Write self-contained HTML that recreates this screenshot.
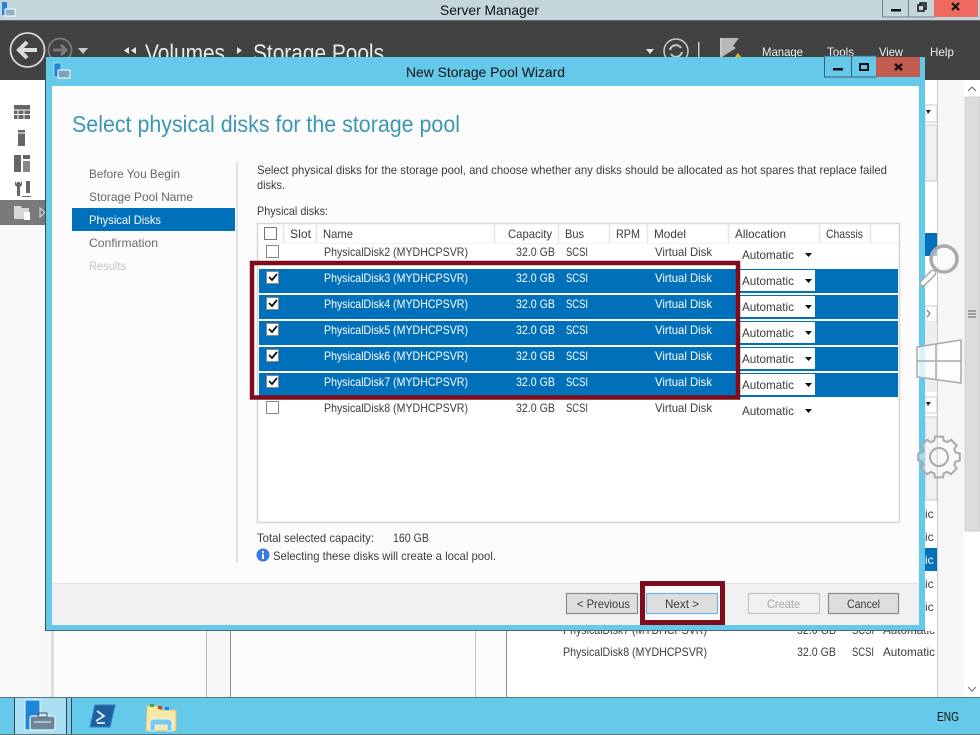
<!DOCTYPE html>
<html><head><meta charset="utf-8"><title>Server Manager</title>
<style>
html,body{margin:0;padding:0;width:980px;height:735px;overflow:hidden;background:#fff}
svg{display:block;filter:blur(.3px)}
text{font-family:"Liberation Sans",sans-serif;font-size:12px;fill:#3c3c3c}
.w{fill:#fff}.d{fill:#111}.n{fill:#666}.s{font-size:11.500px}
</style></head><body>
<svg xmlns="http://www.w3.org/2000/svg" width="980" height="735" viewBox="0 0 980 735">
<rect width="980" height="735" fill="#fff"/>
<!-- main title bar -->
<rect width="980" height="21" fill="#c3d6dc"/>
<rect y="20" width="980" height="1" fill="#5d676b"/>
<rect x="2" y="2" width="5" height="13" fill="#1e86d8"/><rect x="5" y="9" width="10" height="7" fill="#8fb4c8" stroke="#fff"/>
<text x="440" y="15" textLength="99" lengthAdjust="spacingAndGlyphs" class="d" style="font-size:14px">Server Manager</text>
<g stroke="#75868c" fill="#c3d6dc"><rect x="882.500" y="-1" width="26" height="18"/><rect x="908.500" y="-1" width="26" height="18"/></g>
<rect x="934" y="0" width="44" height="17" fill="#ee6a5e"/>
<rect x="891" y="9" width="10" height="2.500" fill="#111"/>
<path d="M918 5h6v6h-6zM920 5V3h6v6h-2" fill="none" stroke="#111" stroke-width="1.500"/>
<path d="M952 3l7 7M959 3l-7 7" stroke="#111" stroke-width="2.200"/>
<!-- dark command bar -->
<rect y="21" width="980" height="59" fill="#424242"/>
<circle cx="27.500" cy="50" r="17" fill="none" stroke="#d8d8d8" stroke-width="1.800"/>
<path d="M37 50H19M27 42l-8 8 8 8" fill="none" stroke="#dcdcdc" stroke-width="4"/>
<circle cx="60" cy="50" r="11.500" fill="none" stroke="#7a7a7a" stroke-width="1.800"/>
<path d="M53 50h13M61 45l5 5-5 5" fill="none" stroke="#7a7a7a" stroke-width="3"/>
<path d="M78 48h10l-5 6z" fill="#c8c8c8"/>
<path d="M129 47v7l-5-3.500zM136 47v7l-5-3.500zM237 47v7l5-3.500z" fill="#e4e4e4"/>
<text x="145" y="61" textLength="80" lengthAdjust="spacingAndGlyphs" style="font-size:24px;fill:#e8e8e8">Volumes</text>
<text x="253" y="61" textLength="131" lengthAdjust="spacingAndGlyphs" style="font-size:24px;fill:#e8e8e8">Storage Pools</text>
<path d="M646 49h8l-4 5z" fill="#e4e4e4"/>
<circle cx="676" cy="51" r="12" fill="none" stroke="#c8c8c8" stroke-width="1.500"/>
<path d="M670 50a6 6 0 0 1 11-2M682 52a6 6 0 0 1-11 2" fill="none" stroke="#c8c8c8" stroke-width="2"/>
<rect x="698" y="42" width="1.500" height="15" fill="#c8c8c8"/>
<path d="M721 38h18l-6 8 3 2-14 9z" fill="#b8b8b8"/><rect x="720" y="38" width="2" height="20" fill="#c8c8c8"/>
<path d="M738 53l3 4h-6z" fill="#f5b400"/>
<text x="762" y="56" textLength="41" lengthAdjust="spacingAndGlyphs" style="fill:#eee">Manage</text>
<text x="827" y="56" textLength="27" lengthAdjust="spacingAndGlyphs" style="fill:#eee">Tools</text>
<text x="879" y="56" textLength="24" lengthAdjust="spacingAndGlyphs" style="fill:#eee">View</text>
<text x="930" y="56" textLength="24" lengthAdjust="spacingAndGlyphs" style="fill:#eee">Help</text>
<!-- main body -->
<rect y="80" width="964" height="617" fill="#f7f7f7"/>
<rect x="0" y="80" width="45" height="120" fill="#fff"/>
<rect x="0" y="225" width="45" height="472" fill="#f8f8f8"/>
<rect y="200" width="45" height="25" fill="#7a7a7a"/>
<!-- nav icons -->
<g fill="#666">
<path d="M14 105h16v14H14z"/><rect x="18" y="130" width="7" height="16"/>
<path d="M14 155h7v17h-7zM23 155h7v4h-7z"/><rect x="23" y="161" width="7" height="11" fill="#888"/>
<path d="M26 181h4v12h-4zM17 182h3v14h-3zM15 181l2 3h3l2-3v4l-2 2h-3l-2-2zM22 196h9v1h-9z"/>
</g>
<path d="M18 110v9M24 110v9M14 110h16M14 114.500h16" stroke="#fff" stroke-width="1"/>
<path d="M18 133h7" stroke="#fff"/>
<path d="M14 206h7l1 2h7v11H14z" fill="#d8d8d8"/><rect x="24" y="212" width="6" height="8" fill="#fff"/>
<path d="M40 208l5 4.500-5 4.500z" fill="none" stroke="#ddd"/>
<!-- panels below wizard -->
<rect x="51" y="631" width="3" height="66" fill="#dcdcdc"/>
<rect x="54" y="631" width="152" height="66" fill="#fbfbfb"/>
<rect x="206" y="631" width="1" height="66" fill="#bcbcbc"/>
<rect x="230" y="631" width="1" height="66" fill="#8c8c8c"/>
<rect x="231" y="631" width="244" height="66" fill="#fbfbfb"/>
<rect x="475" y="631" width="1" height="66" fill="#c4c4c4"/>
<rect x="476" y="631" width="30" height="66" fill="#fbfbfb"/>
<rect x="506" y="631" width="431" height="66" fill="#fff"/>
<rect x="506" y="631" width="1" height="66" fill="#8c8c8c"/>
<text x="563" y="634" textLength="144" lengthAdjust="spacingAndGlyphs">PhysicalDisk7 (MYDHCPSVR)</text>
<text x="797" y="634" textLength="39" lengthAdjust="spacingAndGlyphs">32.0 GB</text>
<text x="852" y="634" textLength="22" lengthAdjust="spacingAndGlyphs" class="s">SCSI</text>
<text x="883" y="634" textLength="52" lengthAdjust="spacingAndGlyphs">Automatic</text>
<text x="563" y="656" textLength="144" lengthAdjust="spacingAndGlyphs">PhysicalDisk8 (MYDHCPSVR)</text>
<text x="797" y="656" textLength="39" lengthAdjust="spacingAndGlyphs">32.0 GB</text>
<text x="852" y="656" textLength="22" lengthAdjust="spacingAndGlyphs" class="s">SCSI</text>
<text x="883" y="656" textLength="52" lengthAdjust="spacingAndGlyphs">Automatic</text>
<!-- strip right of wizard -->
<rect x="925" y="80" width="12" height="551" fill="#fff"/>
<rect x="925" y="105" width="12" height="17" fill="#fff" stroke="#c8c8c8"/>
<rect x="925" y="125" width="12" height="56" fill="#f0f0f0" stroke="#ccc"/>
<rect x="925" y="233" width="12" height="23" fill="#0070ba"/>
<rect x="925" y="306" width="12" height="16" fill="#fff" stroke="#ccc"/>
<rect x="925" y="322" width="12" height="70" fill="#eee"/>
<rect x="925" y="397" width="12" height="16" fill="#fff" stroke="#ccc"/>
<path d="M926 402h5l-3 4z M926 110h5l-3 4z" fill="#222"/>
<path d="M927 310l3 3.500-3 3.500" fill="none" stroke="#666"/>
<rect x="925" y="417" width="12" height="83" fill="#f0f0f0" stroke="#ccc"/>
<rect x="925" y="548" width="12" height="23" fill="#0070ba"/>
<rect x="937" y="80" width="1" height="617" fill="#c8c8c8"/>
<rect x="938" y="80" width="26" height="617" fill="#f6f6f6"/>
<text x="925" y="518">ic</text><text x="925" y="541">ic</text><text x="925" y="564" style="fill:#fff">ic</text><text x="925" y="588">ic</text><text x="925" y="611">ic</text>
<!-- scrollbar -->
<rect x="964" y="80" width="16" height="617" fill="#fff"/>
<rect x="965" y="97" width="15" height="434" fill="#dcdcdc" stroke="#cfcfcf"/>
<path d="M968 91l4-4 4 4M968 687l4 4 4-4" fill="none" stroke="#777" stroke-width="1.200"/>
<path d="M968 311h8M968 314h8M968 317h8" stroke="#777" stroke-width="1.200"/>
<!-- wizard window -->
<rect x="45" y="57" width="880" height="574" fill="#65c9ea"/>
<rect x="45" y="57" width="1" height="574" fill="#3d4a50"/>
<rect x="45" y="630" width="880" height="1" fill="#4c6570"/>
<rect x="54" y="63" width="7" height="14" fill="#1e86d8" stroke="#bfe8f6" stroke-width=".700"/>
<rect x="58" y="70" width="12" height="8" fill="#7fa3b8" stroke="#fff"/>
<text x="406" y="77" textLength="159" lengthAdjust="spacingAndGlyphs" class="d" style="font-size:14px">New Storage Pool Wizard</text>
<g stroke="#40616e" fill="#65c9ea"><rect x="824.500" y="56" width="27" height="21"/><rect x="851.500" y="56" width="25" height="21"/></g>
<rect x="876" y="57" width="44" height="20" fill="#c25b50"/>
<rect x="833" y="68" width="10" height="2.500" fill="#111"/>
<rect x="860" y="64" width="8" height="6" fill="none" stroke="#111" stroke-width="2"/>
<path d="M895 64l7 6M902 64l-7 6" stroke="#111" stroke-width="2.400"/>
<rect x="52" y="86" width="867" height="539" fill="#fcfcfc"/>
<text x="72" y="132" textLength="388" lengthAdjust="spacingAndGlyphs" style="font-size:23px;fill:#3c97b3">Select physical disks for the storage pool</text>
<!-- wizard steps -->
<rect x="72" y="208" width="163" height="23" fill="#0070ba"/>
<text x="89" y="178" textLength="91" lengthAdjust="spacingAndGlyphs" class="n">Before You Begin</text>
<text x="89" y="201" textLength="104" lengthAdjust="spacingAndGlyphs" class="n">Storage Pool Name</text>
<text x="89" y="224" textLength="72" lengthAdjust="spacingAndGlyphs" class="w">Physical Disks</text>
<text x="89" y="247" textLength="69" lengthAdjust="spacingAndGlyphs" class="n">Confirmation</text>
<text x="89" y="270" textLength="37" lengthAdjust="spacingAndGlyphs" style="fill:#c4c4c4">Results</text>
<rect x="236" y="162" width="2" height="401" fill="#e2e2e2"/>
<text x="257" y="174" textLength="630" lengthAdjust="spacingAndGlyphs">Select physical disks for the storage pool, and choose whether any disks should be allocated as hot spares that replace failed</text>
<text x="257" y="189" textLength="28" lengthAdjust="spacingAndGlyphs">disks.</text>
<text x="257" y="215" textLength="71" lengthAdjust="spacingAndGlyphs">Physical disks:</text>
<!-- table -->
<rect x="257.500" y="223.500" width="642" height="299" fill="#fff" stroke="#d6d6d6" stroke-width="1.500"/>
<path d="M283.500 224v19M316.500 224v19M494.500 224v19M558.500 224v19M609.500 224v19M647.500 224v19M728.500 224v19M819.500 224v19M870.500 224v19" stroke="#e6e6e6" stroke-width="1.500"/>
<rect x="258" y="243" width="641" height="1" fill="#f2f2f2"/>
<rect x="264.500" y="227.500" width="12" height="12" fill="#fff" stroke="#777"/>
<text x="290" y="238" textLength="21" lengthAdjust="spacingAndGlyphs">Slot</text>
<text x="323" y="238" textLength="30" lengthAdjust="spacingAndGlyphs">Name</text>
<text x="508" y="238" textLength="44" lengthAdjust="spacingAndGlyphs">Capacity</text>
<text x="565" y="238" textLength="19" lengthAdjust="spacingAndGlyphs">Bus</text>
<text x="616" y="238" textLength="24" lengthAdjust="spacingAndGlyphs">RPM</text>
<text x="654" y="238" textLength="32" lengthAdjust="spacingAndGlyphs">Model</text>
<text x="735" y="238" textLength="51" lengthAdjust="spacingAndGlyphs">Allocation</text>
<text x="826" y="238" textLength="37" lengthAdjust="spacingAndGlyphs">Chassis</text>
<!-- selected rows -->
<g fill="#0070ba">
<rect x="259" y="269" width="639" height="24"/><rect x="259" y="295" width="639" height="24"/><rect x="259" y="321" width="639" height="24"/><rect x="259" y="347" width="639" height="24"/><rect x="259" y="373" width="639" height="24"/>
</g>
<g fill="#fff">
<rect x="740" y="270" width="75" height="21"/><rect x="740" y="296" width="75" height="21"/><rect x="740" y="322" width="75" height="21"/><rect x="740" y="348" width="75" height="21"/><rect x="740" y="374" width="75" height="21"/>
</g>
<!-- checkboxes -->
<g fill="#fff" stroke="#888">
<rect x="266.500" y="245.500" width="12" height="12"/><rect x="266.500" y="271.500" width="12" height="12"/><rect x="266.500" y="297.500" width="12" height="12"/><rect x="266.500" y="323.500" width="12" height="12"/><rect x="266.500" y="349.500" width="12" height="12"/><rect x="266.500" y="375.500" width="12" height="12"/><rect x="266.500" y="401.500" width="12" height="12"/>
</g>
<g fill="none" stroke="#111" stroke-width="1.800">
<path d="M269 277l3 3 5-6"/><path d="M269 303l3 3 5-6"/><path d="M269 329l3 3 5-6"/><path d="M269 355l3 3 5-6"/><path d="M269 381l3 3 5-6"/>
</g>
<!-- row text -->
<text x="324" y="256" textLength="144" lengthAdjust="spacingAndGlyphs">PhysicalDisk2 (MYDHCPSVR)</text><text x="516" y="256" textLength="39" lengthAdjust="spacingAndGlyphs">32.0 GB</text><text x="566" y="256" textLength="22" lengthAdjust="spacingAndGlyphs" class="s">SCSI</text><text x="655" y="256" textLength="57" lengthAdjust="spacingAndGlyphs">Virtual Disk</text>
<text class="w" x="324" y="282" textLength="144" lengthAdjust="spacingAndGlyphs">PhysicalDisk3 (MYDHCPSVR)</text><text class="w" x="516" y="282" textLength="39" lengthAdjust="spacingAndGlyphs">32.0 GB</text><text class="w s" x="566" y="282" textLength="22" lengthAdjust="spacingAndGlyphs">SCSI</text><text class="w" x="655" y="282" textLength="57" lengthAdjust="spacingAndGlyphs">Virtual Disk</text>
<text class="w" x="324" y="308" textLength="144" lengthAdjust="spacingAndGlyphs">PhysicalDisk4 (MYDHCPSVR)</text><text class="w" x="516" y="308" textLength="39" lengthAdjust="spacingAndGlyphs">32.0 GB</text><text class="w s" x="566" y="308" textLength="22" lengthAdjust="spacingAndGlyphs">SCSI</text><text class="w" x="655" y="308" textLength="57" lengthAdjust="spacingAndGlyphs">Virtual Disk</text>
<text class="w" x="324" y="334" textLength="144" lengthAdjust="spacingAndGlyphs">PhysicalDisk5 (MYDHCPSVR)</text><text class="w" x="516" y="334" textLength="39" lengthAdjust="spacingAndGlyphs">32.0 GB</text><text class="w s" x="566" y="334" textLength="22" lengthAdjust="spacingAndGlyphs">SCSI</text><text class="w" x="655" y="334" textLength="57" lengthAdjust="spacingAndGlyphs">Virtual Disk</text>
<text class="w" x="324" y="360" textLength="144" lengthAdjust="spacingAndGlyphs">PhysicalDisk6 (MYDHCPSVR)</text><text class="w" x="516" y="360" textLength="39" lengthAdjust="spacingAndGlyphs">32.0 GB</text><text class="w s" x="566" y="360" textLength="22" lengthAdjust="spacingAndGlyphs">SCSI</text><text class="w" x="655" y="360" textLength="57" lengthAdjust="spacingAndGlyphs">Virtual Disk</text>
<text class="w" x="324" y="386" textLength="144" lengthAdjust="spacingAndGlyphs">PhysicalDisk7 (MYDHCPSVR)</text><text class="w" x="516" y="386" textLength="39" lengthAdjust="spacingAndGlyphs">32.0 GB</text><text class="w s" x="566" y="386" textLength="22" lengthAdjust="spacingAndGlyphs">SCSI</text><text class="w" x="655" y="386" textLength="57" lengthAdjust="spacingAndGlyphs">Virtual Disk</text>
<text x="324" y="412" textLength="144" lengthAdjust="spacingAndGlyphs">PhysicalDisk8 (MYDHCPSVR)</text><text x="516" y="412" textLength="39" lengthAdjust="spacingAndGlyphs">32.0 GB</text><text x="566" y="412" textLength="22" lengthAdjust="spacingAndGlyphs" class="s">SCSI</text><text x="655" y="412" textLength="57" lengthAdjust="spacingAndGlyphs">Virtual Disk</text>
<!-- allocation -->
<text x="742" y="259" textLength="52" lengthAdjust="spacingAndGlyphs">Automatic</text>
<text x="742" y="285" textLength="52" lengthAdjust="spacingAndGlyphs">Automatic</text>
<text x="742" y="311" textLength="52" lengthAdjust="spacingAndGlyphs">Automatic</text>
<text x="742" y="337" textLength="52" lengthAdjust="spacingAndGlyphs">Automatic</text>
<text x="742" y="363" textLength="52" lengthAdjust="spacingAndGlyphs">Automatic</text>
<text x="742" y="389" textLength="52" lengthAdjust="spacingAndGlyphs">Automatic</text>
<text x="742" y="415" textLength="52" lengthAdjust="spacingAndGlyphs">Automatic</text>
<path d="M805 253h7l-3.500 4zM805 279h7l-3.500 4zM805 305h7l-3.500 4zM805 331h7l-3.500 4zM805 357h7l-3.500 4zM805 383h7l-3.500 4zM805 409h7l-3.500 4z" fill="#111"/>
<!-- red highlight -->
<rect x="252" y="263" width="486" height="134.500" fill="none" stroke="#7e0c1a" stroke-width="4.500"/>
<!-- totals -->
<text x="257" y="542" textLength="117" lengthAdjust="spacingAndGlyphs">Total selected capacity:</text>
<text x="393" y="542" textLength="36" lengthAdjust="spacingAndGlyphs">160 GB</text>
<circle cx="263" cy="555" r="6.500" fill="#3b78e0"/>
<rect x="262" y="554" width="2" height="5" fill="#fff"/><rect x="262" y="551" width="2" height="2" fill="#fff"/>
<text x="273" y="560" textLength="223" lengthAdjust="spacingAndGlyphs">Selecting these disks will create a local pool.</text>
<!-- bottom bar -->
<rect x="52" y="583" width="867" height="42" fill="#f0f0f0"/>
<rect x="52" y="583" width="867" height="1" fill="#e4e4e4"/>
<rect x="642.500" y="583.500" width="80" height="39" fill="#fafafa" stroke="#7e0c1a" stroke-width="5"/>
<rect x="566.500" y="593.500" width="71" height="20" fill="#dedede" stroke="#8a8a8a" stroke-width="1.200"/>
<rect x="646.500" y="593.500" width="71" height="20" fill="#dedede" stroke="#6fb4ea" stroke-width="1.200"/>
<rect x="748.500" y="593.500" width="71" height="20" fill="#f0f0f0" stroke="#c4c4c4" stroke-width="1.200"/>
<rect x="828.500" y="593.500" width="70" height="20" fill="#dedede" stroke="#8a8a8a" stroke-width="1.200"/>
<text x="577" y="608" textLength="53" lengthAdjust="spacingAndGlyphs">&lt; Previous</text>
<text x="665" y="608" textLength="34" lengthAdjust="spacingAndGlyphs">Next &gt;</text>
<text x="767" y="608" textLength="33" lengthAdjust="spacingAndGlyphs" style="fill:#a8a8a8">Create</text>
<text x="847" y="608" textLength="33" lengthAdjust="spacingAndGlyphs">Cancel</text>
<!-- charms overlay (above the wizard) -->
<g fill="none">
<path d="M923 283l10-10" stroke="#aaa" stroke-width="7" stroke-linecap="round"/>
<path d="M923 283l10-10" stroke="#fff" stroke-width="4" stroke-linecap="round"/>
<circle cx="944" cy="259" r="13" fill="#fff" fill-opacity=".6" stroke="#aaa" stroke-width="3.500"/>
<path d="M917 347l44-7v43l-44-6z" fill="#fff" fill-opacity=".75" stroke="#aaa" stroke-width="1.500"/>
<path d="M936 344v35M917 361h44" stroke="#aaa" stroke-width="1.500"/>
<path transform="translate(939,457) scale(.8) translate(-938,-462.500)" d="M933 437h10l1 5 4 2 5-3 7 7-3 5 2 4 5 1v9l-5 1-2 4 3 5-7 7-5-3-4 2-1 5h-10l-1-5-4-2-5 3-7-7 3-5-2-4-5-1v-9l5-1 2-4-3-5 7-7 5 3 4-2z" stroke="#aaa" stroke-width="2.500" fill="#fff" fill-opacity=".35"/>
<circle cx="939" cy="457" r="9" stroke="#aaa" stroke-width="2"/>
</g>
<!-- taskbar -->
<rect y="697" width="980" height="38" fill="#65c9ea"/>
<rect y="697" width="980" height="1" fill="#5f7681"/>
<rect y="734" width="980" height="1" fill="#5f7681"/>
<rect x="14" y="698" width="57" height="36" fill="#a9dff2"/>
<path d="M14.500 698v36M66.500 698v36M71.500 698v36" stroke="#2f4550"/>
<rect x="67" y="698" width="4" height="36" fill="#7fd2ee"/>
<rect x="25" y="700" width="15" height="30" fill="#1e86d8" stroke="#e6f7fd"/>
<rect x="30" y="716" width="25" height="14" rx="2" fill="#6d8799" stroke="#e6f7fd" stroke-width="1.200"/>
<rect x="38" y="713" width="9" height="4" fill="none" stroke="#555"/>
<path d="M34 722h17" stroke="#e6f7fd"/>
<path d="M95 705h20l-5 22H90z" fill="#1f5f9f" stroke="#2c7fc0"/>
<path d="M97 711l7 5-8 5M97 723h8" fill="none" stroke="#e8f4ff" stroke-width="1.700"/>
<path d="M147 706h10l3 4h16v21h-30z" fill="#f4e9a8" stroke="#d9c078"/>
<rect x="150" y="704" width="4" height="3" fill="#3aa83a"/><rect x="158" y="706" width="4" height="3" fill="#d93a2a"/><rect x="165" y="707" width="4" height="3" fill="#2a7ad9"/>
<path d="M150 731v-8a4 4 0 0 1 4-4h14a4 4 0 0 1 4 4v8h-5v-6h-12v6z" fill="#7cc8ea" stroke="#dff3fb"/>
<text x="937" y="721" textLength="22" lengthAdjust="spacingAndGlyphs" class="d" style="font-size:13px">ENG</text>
</svg>
</body></html>
